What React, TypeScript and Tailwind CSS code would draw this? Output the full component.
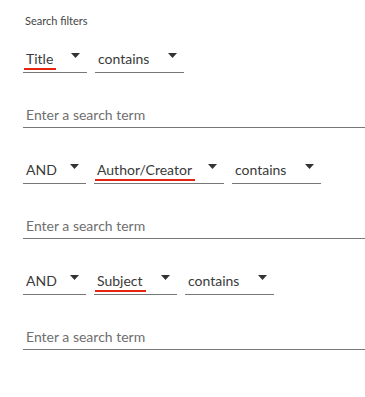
import React from "react";

interface SelectProps {
  value: string;
  width: string;
  marked?: boolean;
}

function Caret() {
  return (
    <svg
      className="absolute right-[7px] top-[5px] h-[5px] w-[9px]"
      viewBox="0 0 9 5"
      fill="#333333"
    >
      <path d="M0 0h9L4.5 5z" />
    </svg>
  );
}

function FilterSelect({ value, width, marked }: SelectProps) {
  return (
    <div
      className={`relative h-[25px] shrink-0 border-b border-[#777777] ${width}`}
    >
      <span
        className={
          marked
            ? "ml-px inline-block border-b-2 border-[#e5250f] pl-[2px] pr-[3px] leading-[19px] text-[#3a3a3a]"
            : "inline-block pl-[3px] leading-[19px] text-[#3a3a3a]"
        }
      >
        {value}
      </span>
      <Caret />
    </div>
  );
}

function SearchTerm() {
  return (
    <input
      type="text"
      placeholder="Enter a search term"
      className="mt-[32px] block h-[23px] w-full border-b border-[#777777] bg-transparent pb-[4px] pl-[3px] text-[14px] leading-[18px] text-[#3a3a3a] outline-none placeholder:text-[#6f6f6f]"
    />
  );
}

export default function App() {
  const rows = [
    { op: null, field: "Title", fieldWidth: "w-[64px]" },
    { op: "AND", field: "Author/Creator", fieldWidth: "w-[130px]" },
    { op: "AND", field: "Subject", fieldWidth: "w-[83px]" },
  ];

  return (
    <div
      className="h-[397px] w-[365px] bg-white pl-[23px] pt-[13px] text-[14px]"
      style={{ fontFamily: "Lato, 'Noto Sans', sans-serif" }}
    >
      <p className="pl-[2px] text-[11px] leading-[16px] text-[#444444]">
        Search filters
      </p>

      {rows.map((row, i) => (
        <div key={row.field} className={i === 0 ? "mt-[19px]" : "mt-[31px]"}>
          <div className="flex gap-[8px]">
            {row.op && <FilterSelect value={row.op} width="w-[63px]" />}
            <FilterSelect value={row.field} width={row.fieldWidth} marked />
            <FilterSelect value="contains" width="w-[89px]" />
          </div>
          <SearchTerm />
        </div>
      ))}
    </div>
  );
}
